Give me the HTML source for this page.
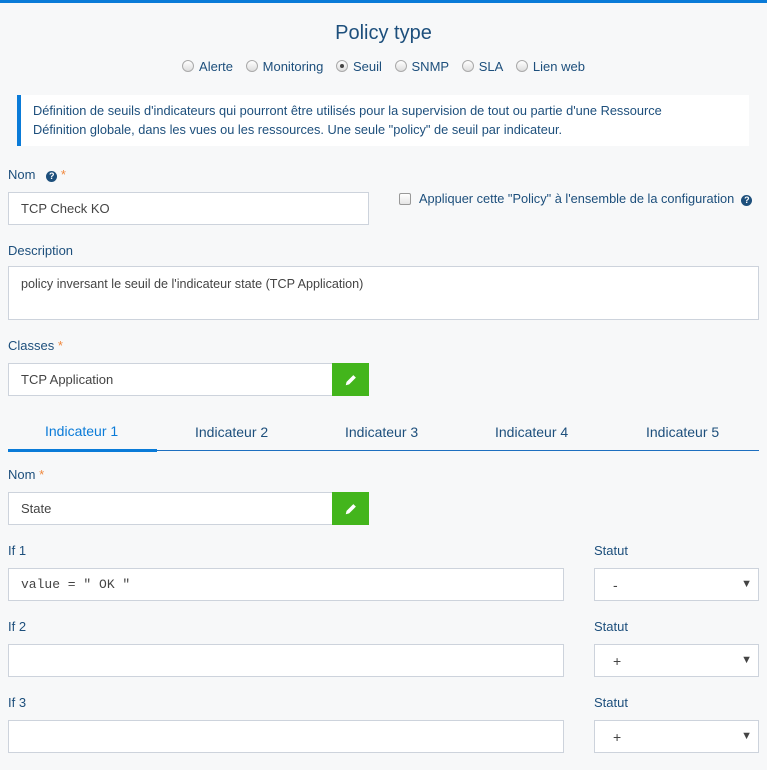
<!DOCTYPE html>
<html><head><meta charset="utf-8"><style>
*{box-sizing:border-box;margin:0;padding:0}
body{width:767px;height:770px;background:#f7f8f9;font-family:"Liberation Sans",Arial,sans-serif;color:#1d4f7c;position:relative;overflow:hidden;font-size:13px}
.a{position:absolute;white-space:nowrap}
.inp{position:absolute;background:#fff;border:1px solid #cdd3dc;font-size:13px;color:#444;padding-left:12px;display:flex;align-items:center}
.btn{position:absolute;background:#43b51c;width:37px;height:33px;display:flex;align-items:center;justify-content:center}
.star{color:#f0883e}
.rad{display:inline-block;width:12px;height:12px;border-radius:50%;border:1px solid #aaa;background:linear-gradient(#fff,#ddd);vertical-align:-1px;margin-right:5px;position:relative}
.sel{position:absolute;background:#fff;border:1px solid #cdd3dc;font-size:14px;color:#444;padding-left:18px;display:flex;align-items:center}
.sel:after{content:"▼";position:absolute;right:6px;font-size:11px;color:#444;top:9px}
.g{margin-right:9px}
.q{display:inline-block;width:11px;height:11px;border-radius:50%;background:#1d4f7c;color:#fff;font-size:9px;font-weight:bold;text-align:center;line-height:11px}
</style></head><body>
<div class="a" style="left:0;top:0;width:767px;height:3px;background:#0a7bd8"></div>
<div class="a" style="left:0;width:767px;top:22px;text-align:center;font-size:20px">Policy type</div>
<div class="a" style="left:0;width:767px;top:59px;text-align:center;font-size:13px">
<span class="rad"></span><span class="g">Alerte</span> <span class="rad"></span><span class="g">Monitoring</span> <span class="rad"><span style="position:absolute;left:3px;top:3px;width:4px;height:4px;border-radius:50%;background:#444"></span></span><span class="g">Seuil</span> <span class="rad"></span><span class="g">SNMP</span> <span class="rad"></span><span class="g">SLA</span> <span class="rad"></span>Lien web</div>
<div class="a" style="left:17px;top:95px;width:732px;height:51px;background:#fff;border-left:4px solid #0a7bd8;padding:6px 0 0 12px;font-size:12.8px;line-height:19px">Définition de seuils d'indicateurs qui pourront être utilisés pour la supervision de tout ou partie d'une Ressource<br>Définition globale, dans les vues ou les ressources. Une seule "policy" de seuil par indicateur.</div>
<div class="a" style="left:8px;top:167px">Nom &nbsp;&nbsp;<span class="q">?</span> <span class="star">*</span></div>
<div class="inp" style="left:8px;top:192px;width:361px;height:33px">TCP Check KO</div>
<div class="a" style="left:399px;top:193px;width:12px;height:12px;border:1px solid #999;border-radius:2px;background:linear-gradient(#fff,#e5e5e5)"></div>
<div class="a" style="left:419px;top:191px;font-size:12.8px">Appliquer cette "Policy" à l'ensemble de la configuration &nbsp;<span class="q">?</span></div>
<div class="a" style="left:8px;top:243px">Description</div>
<div class="inp" style="left:8px;top:266px;width:751px;height:54px;align-items:flex-start;padding-top:10px;font-size:12.6px">policy inversant le seuil de l'indicateur state (TCP Application)</div>
<div class="a" style="left:8px;top:338px">Classes <span class="star">*</span></div>
<div class="inp" style="left:8px;top:363px;width:325px;height:33px">TCP Application</div>
<div class="btn" style="left:332px;top:363px"><svg width="14" height="14" viewBox="0 0 12 12"><path d="M1.5 10.5 L2.2 7.6 L8 1.8 L10.2 4 L4.4 9.8 Z" fill="#fff"/></svg></div>
<div class="a" style="left:8px;top:450px;width:751px;height:1px;background:#1d6fc0"></div>
<div class="a" style="left:8px;top:449px;width:149px;height:3px;background:#0a7bd8"></div>
<div class="a" style="left:45px;top:423px;font-size:14px;color:#0a7bd8">Indicateur 1</div>
<div class="a" style="left:195px;top:424px;font-size:14px">Indicateur 2</div>
<div class="a" style="left:345px;top:424px;font-size:14px">Indicateur 3</div>
<div class="a" style="left:495px;top:424px;font-size:14px">Indicateur 4</div>
<div class="a" style="left:646px;top:424px;font-size:14px">Indicateur 5</div>
<div class="a" style="left:8px;top:467px">Nom <span class="star">*</span></div>
<div class="inp" style="left:8px;top:492px;width:325px;height:33px">State</div>
<div class="btn" style="left:332px;top:492px"><svg width="14" height="14" viewBox="0 0 12 12"><path d="M1.5 10.5 L2.2 7.6 L8 1.8 L10.2 4 L4.4 9.8 Z" fill="#fff"/></svg></div>
<div class="a" style="left:8px;top:543px">If 1</div><div class="a" style="left:594px;top:543px">Statut</div>
<div class="inp" style="left:8px;top:568px;width:556px;height:33px;font-family:'Liberation Mono',monospace;font-size:13px">value = " OK "</div>
<div class="sel" style="left:594px;top:568px;width:165px;height:33px">-</div>
<div class="a" style="left:8px;top:619px">If 2</div><div class="a" style="left:594px;top:619px">Statut</div>
<div class="inp" style="left:8px;top:644px;width:556px;height:33px"></div>
<div class="sel" style="left:594px;top:644px;width:165px;height:33px">+</div>
<div class="a" style="left:8px;top:695px">If 3</div><div class="a" style="left:594px;top:695px">Statut</div>
<div class="inp" style="left:8px;top:720px;width:556px;height:33px"></div>
<div class="sel" style="left:594px;top:720px;width:165px;height:33px">+</div>
</body></html>
